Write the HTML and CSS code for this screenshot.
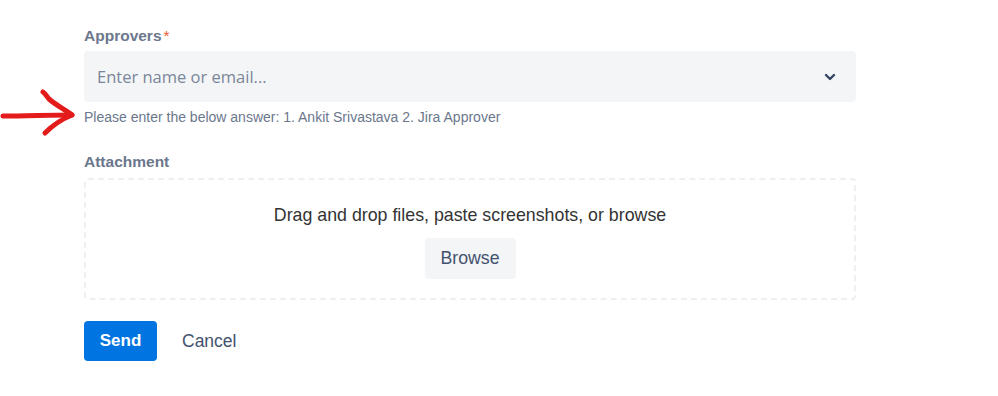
FILE: index.html
```html
<!DOCTYPE html>
<html lang="en">
<head>
    <meta charset="UTF-8">
    <title>Request</title>
    <link rel="stylesheet" href="styles.css">
</head>
<body>
    <div class="form">
        <div class="field">
            <label class="label">Approvers<span class="req">*</span></label>
            <div class="select">
                <span class="placeholder">Enter name or email...</span>
                <svg class="chevron" width="12" height="8" viewBox="0 0 12 8">
                    <path d="M2 2 L6 6 L10 2" fill="none" stroke="#344563" stroke-width="2.4" stroke-linecap="round" stroke-linejoin="round"/>
                </svg>
            </div>
            <div class="help">
                <svg class="arrow" width="80" height="56" viewBox="0 0 80 56">
                    <path d="M3 31 C25 31 50 30 72 30" fill="none" stroke="#e31b1b" stroke-width="5" stroke-linecap="round"/>
                    <path d="M43 7 C46 9 47 12 49 14 C57 21 66 25 72 30 C62 34 52 41 45 48" fill="none" stroke="#e31b1b" stroke-width="5" stroke-linecap="round" stroke-linejoin="round"/>
                </svg>
                Please enter the below answer: 1. Ankit Srivastava 2. Jira Approver
            </div>
        </div>
        <div class="field">
            <label class="label">Attachment</label>
            <div class="dropzone">
                <p class="drop-text">Drag and drop files, paste screenshots, or browse</p>
                <button class="browse">Browse</button>
            </div>
        </div>
        <div class="actions">
            <button class="send">Send</button>
            <button class="cancel">Cancel</button>
        </div>
    </div>
</body>
</html>
```

FILE: styles.css
```css
body {
    margin: 0;
    background: #fff;
    font-family: "Liberation Sans", Arial, sans-serif;
}
.form {
    width: 772px;
    margin-left: 84px;
    padding-top: 26px;
}
.field {
    margin-bottom: 26px;
}
.label {
    display: block;
    font-size: 15.5px;
    font-weight: bold;
    color: #6b778c;
    line-height: 19px;
    margin-bottom: 6px;
}
.field + .field .label {
    margin-bottom: 7px;
}
.req {
    color: #f0592b;
    margin-left: 2px;
    font-weight: normal;
}
.select {
    height: 51px;
    background: #f4f5f7;
    border-radius: 4px;
    display: flex;
    align-items: center;
    justify-content: space-between;
    padding: 0 20px 0 13px;
}
.placeholder {
    font-family: "Open Sans", sans-serif;
    font-size: 16.5px;
    color: #7a869a;
}
.chevron {
    display: block;
}
.help {
    position: relative;
    font-size: 14px;
    color: #6b778c;
    margin-top: 6px;
    line-height: 18px;
}
.arrow {
    position: absolute;
    left: -84px;
    top: -23px;
}
.dropzone {
    height: 122px;
    border: 2px dashed #eeeff2;
    border-radius: 4px;
    text-align: center;
    box-sizing: border-box;
    padding-top: 24px;
}
.drop-text {
    margin: 0 0 12px;
    font-size: 17.8px;
    color: #333;
    line-height: 22px;
}
.browse {
    font-family: "Liberation Sans", Arial, sans-serif;
    font-size: 17.7px;
    color: #42526e;
    background: #f4f5f7;
    border: none;
    border-radius: 4px;
    width: 91px;
    height: 41px;
}
.actions {
    display: flex;
    align-items: center;
    gap: 25px;
    margin-top: -5px;
}
.send {
    font-family: "Liberation Sans", Arial, sans-serif;
    font-size: 17px;
    font-weight: bold;
    color: #fff;
    background: #0074e0;
    border: none;
    border-radius: 4px;
    width: 73px;
    height: 40px;
}
.cancel {
    font-family: "Liberation Sans", Arial, sans-serif;
    font-size: 17.5px;
    color: #42526e;
    background: none;
    border: none;
    padding: 0;
}
```
